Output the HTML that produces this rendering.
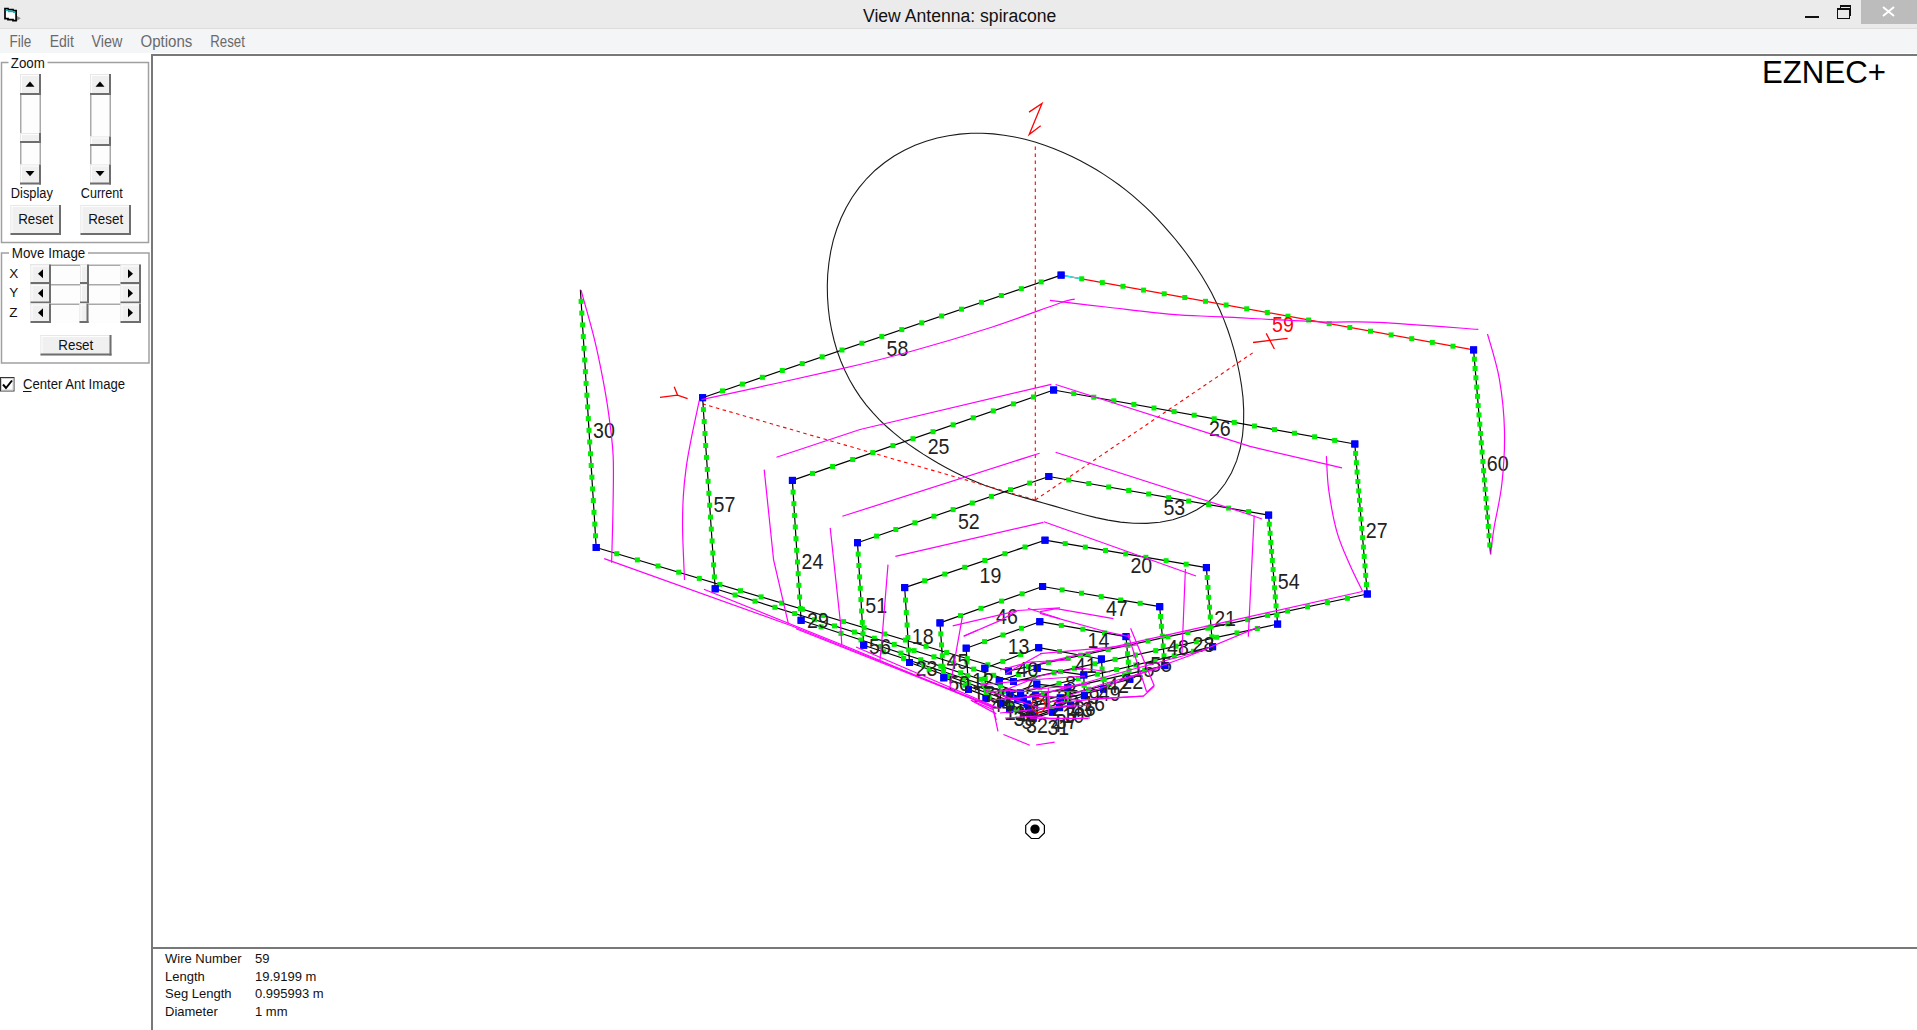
<!DOCTYPE html>
<html><head><meta charset="utf-8"><style>
html,body{margin:0;padding:0;}
body{width:1917px;height:1030px;position:relative;overflow:hidden;background:#fff;font-family:"Liberation Sans", sans-serif;}
.a{position:absolute;}
.t{position:absolute;white-space:nowrap;line-height:1;}
</style></head><body>
<div class="a" style="left:0;top:0;width:1917px;height:28px;background:#ebebeb;"></div>
<div class="a" style="left:0;top:28px;width:1917px;height:1px;background:#dcdcdc;"></div>
<div class="a" style="left:0;top:29px;width:1917px;height:24px;background:#f4f5f7;"></div>
<svg class="a" style="left:0;top:0" width="30" height="28"><path d="M17,16 L20.8,18.3 L17,20.8 Z" fill="#8a8a8a"/><path d="M5,8.6 H8 V9.6 H13 V10.6 H16.1 V20.6 H13 V19.6 H8 V18.6 H5 Z" fill="#fff" stroke="#000" stroke-width="1.7"/><rect x="5.8" y="9.4" width="2.4" height="1.6" fill="#15bcbc"/><rect x="8" y="10.4" width="5.2" height="1.8" fill="#12b0b0"/><rect x="13" y="11.4" width="2.3" height="1.6" fill="#15bcbc"/></svg>
<div class="t" style="left:863px;top:7.6px;font-size:17.6px;color:#111;">View Antenna: spiracone</div>
<div class="a" style="left:1805px;top:16px;width:14px;height:2px;background:#111;"></div>
<div class="a" style="left:1839.5px;top:4.5px;width:11px;height:11px;border:1px solid #111;border-top-width:2px;box-sizing:border-box;"></div>
<div class="a" style="left:1837px;top:7.5px;width:13px;height:11.5px;border:1px solid #111;border-top-width:2px;box-sizing:border-box;background:#ebebeb;"></div>
<div class="a" style="left:1861px;top:0;width:56px;height:24px;background:#bcbcbc;"></div>
<svg class="a" style="left:1861px;top:0" width="56" height="24"><path d="M22,7 L33,16 M33,7 L22,16" stroke="#fff" stroke-width="2"/></svg>
<svg class="a" style="left:0;top:28px" width="300" height="26" font-family='"Liberation Sans", sans-serif' font-size="16px" fill="#6a6a6a">
<text x="9.5" y="18.6" textLength="21.8" lengthAdjust="spacingAndGlyphs">File</text>
<text x="49.7" y="18.6" textLength="24.2" lengthAdjust="spacingAndGlyphs">Edit</text>
<text x="91.4" y="18.6" textLength="30.9" lengthAdjust="spacingAndGlyphs">View</text>
<text x="140.5" y="18.6" textLength="51.9" lengthAdjust="spacingAndGlyphs">Options</text>
<text x="210.3" y="18.6" textLength="34.6" lengthAdjust="spacingAndGlyphs">Reset</text>
</svg>
<!-- canvas borders -->
<div class="a" style="left:151px;top:54px;width:1766px;height:2px;background:#787878;"></div>
<div class="a" style="left:151px;top:54px;width:2px;height:976px;background:#787878;"></div>
<div class="a" style="left:152px;top:947px;width:1765px;height:2px;background:#787878;"></div>
<svg class="a" style="left:0;top:0" width="1917" height="1030">
<polygon points="831.6,330.0 829.6,319.2 828.3,308.3 827.5,297.1 827.3,285.8 827.7,274.5 828.9,263.0 830.7,251.6 833.3,240.2 836.8,229.0 841.1,218.0 846.2,207.4 852.2,197.2 859.1,187.6 866.8,178.5 875.2,170.2 884.4,162.7 894.1,156.0 904.4,150.2 915.0,145.3 926.0,141.2 937.2,138.0 948.5,135.7 959.8,134.1 971.1,133.3 982.3,133.3 993.3,133.9 1004.1,135.2 1014.7,137.0 1025.0,139.3 1035.0,142.0 1044.7,145.2 1054.1,148.7 1063.1,152.5 1071.9,156.5 1080.4,160.7 1088.6,165.2 1096.5,169.8 1104.2,174.6 1111.6,179.6 1118.9,184.7 1125.9,190.1 1132.7,195.6 1139.2,201.3 1145.6,207.2 1151.8,213.2 1157.8,219.4 1163.7,225.8 1169.4,232.3 1175.1,239.0 1180.6,245.9 1186.1,253.0 1191.4,260.4 1196.6,268.0 1201.7,275.8 1206.6,284.0 1211.4,292.5 1215.8,301.4 1220.1,310.5 1224.1,320.1 1227.8,330.0 1231.2,340.3 1234.3,350.9 1237.1,362.0 1239.5,373.5 1241.5,385.3 1243.0,397.6 1243.7,410.1 1243.6,422.9 1242.5,435.7 1240.2,448.5 1236.6,460.9 1231.5,472.8 1225.0,483.8 1217.0,493.8 1207.6,502.6 1196.9,509.8 1185.3,515.6 1172.8,519.7 1159.9,522.3 1146.7,523.4 1133.5,523.3 1120.5,522.1 1108.0,520.1 1096.0,517.6 1084.5,514.7 1073.6,511.7 1063.3,508.8 1053.5,505.9 1044.1,503.2 1035.0,500.6 1026.2,498.1 1017.6,495.7 1009.1,493.3 1000.8,490.7 992.7,488.1 984.6,485.2 976.6,482.1 968.8,478.7 961.0,475.2 953.4,471.4 945.8,467.4 938.2,463.2 930.7,458.8 923.2,454.1 915.8,449.2 908.3,444.1 900.9,438.6 893.6,432.7 886.5,426.5 879.5,419.8 872.8,412.7 866.3,405.1 860.3,397.1 854.7,388.6 849.5,379.7 844.9,370.4 840.7,360.8 837.1,350.8 834.1,340.5 831.6,330.0" fill="none" stroke="#1a1a1a" stroke-width="1.1"/>
<g stroke="#f00" stroke-width="1.1" fill="none" stroke-dasharray="3.5,3.5"><line x1="1035.3" y1="500.0" x2="1035.3" y2="145"/><line x1="1035.3" y1="500.0" x2="703" y2="404"/><line x1="1035.3" y1="500.0" x2="1254" y2="352"/></g>
<g stroke="#f00" stroke-width="1.3" fill="none"><polyline points="1029,112.1 1042,103.5 1029.2,134.5 1040.7,125.7"/><polyline points="660,397.3 677.5,395.1 687.6,398.6"/><line x1="677.5" y1="395.1" x2="674.2" y2="386.8"/><line x1="1253" y1="342.5" x2="1287.6" y2="338.3"/><line x1="1266.2" y1="333.4" x2="1274.4" y2="349"/></g>
<g stroke-width="1.2"><line x1="1017.6" y1="699.2" x2="1035.6" y2="695.7" stroke="#000"/><line x1="1035.6" y1="695.7" x2="1060.3" y2="697.9" stroke="#000"/><line x1="1060.3" y1="697.9" x2="1059.6" y2="707.6" stroke="#000"/><line x1="1059.6" y1="707.6" x2="1032.7" y2="717.4" stroke="#000"/><line x1="1032.7" y1="717.4" x2="1000.9" y2="703.3" stroke="#000"/><line x1="1000.9" y1="703.3" x2="999.3" y2="680.7" stroke="#000"/><line x1="999.3" y1="680.7" x2="1037.2" y2="668.3" stroke="#000"/><line x1="1037.2" y1="668.3" x2="1083.8" y2="674.9" stroke="#000"/><line x1="1083.8" y1="674.9" x2="1084.4" y2="695.7" stroke="#000"/><line x1="1084.4" y1="695.7" x2="1030.7" y2="712.5" stroke="#000"/><line x1="1030.7" y1="712.5" x2="968.5" y2="689.4" stroke="#000"/><line x1="968.5" y1="689.4" x2="966.2" y2="648.2" stroke="#000"/><line x1="966.2" y1="648.2" x2="1039.8" y2="621.7" stroke="#000"/><line x1="1039.8" y1="621.7" x2="1126.0" y2="636.6" stroke="#000"/><line x1="1126.0" y1="636.6" x2="1129.8" y2="679.3" stroke="#000"/><line x1="1129.8" y1="679.3" x2="1027.2" y2="704.1" stroke="#000"/><line x1="1027.2" y1="704.1" x2="909.5" y2="662.5" stroke="#000"/><line x1="909.5" y1="662.5" x2="904.7" y2="587.6" stroke="#000"/><line x1="904.7" y1="587.6" x2="1045.0" y2="540.2" stroke="#000"/><line x1="1045.0" y1="540.2" x2="1206.4" y2="567.6" stroke="#000"/><line x1="1206.4" y1="567.6" x2="1212.6" y2="646.7" stroke="#000"/><line x1="1212.6" y1="646.7" x2="1020.6" y2="692.5" stroke="#000"/><line x1="1020.6" y1="692.5" x2="801.1" y2="620.3" stroke="#000"/><line x1="801.1" y1="620.3" x2="792.4" y2="480.4" stroke="#000"/><line x1="792.4" y1="480.4" x2="1053.6" y2="390.0" stroke="#000"/><line x1="1053.6" y1="390.0" x2="1354.8" y2="444.0" stroke="#000"/><line x1="1354.8" y1="444.0" x2="1367.3" y2="594.0" stroke="#000"/><line x1="1367.3" y1="594.0" x2="1008.5" y2="671.0" stroke="#000"/><line x1="1008.5" y1="671.0" x2="596.2" y2="547.5" stroke="#000"/><line x1="596.2" y1="547.5" x2="580.4" y2="289.7" stroke="#000"/><line x1="1052.4" y1="712.4" x2="1033.1" y2="718.3" stroke="#000"/><line x1="1033.1" y1="718.3" x2="1009.6" y2="709.6" stroke="#000"/><line x1="1009.6" y1="709.6" x2="1009.9" y2="694.1" stroke="#000"/><line x1="1009.9" y1="694.1" x2="1036.8" y2="684.1" stroke="#000"/><line x1="1036.8" y1="684.1" x2="1067.8" y2="687.7" stroke="#000"/><line x1="1067.8" y1="687.7" x2="1070.6" y2="705.4" stroke="#000"/><line x1="1070.6" y1="705.4" x2="1031.5" y2="714.1" stroke="#000"/><line x1="1031.5" y1="714.1" x2="986.0" y2="698.6" stroke="#000"/><line x1="986.0" y1="698.6" x2="984.8" y2="668.3" stroke="#000"/><line x1="984.8" y1="668.3" x2="1038.7" y2="647.7" stroke="#000"/><line x1="1038.7" y1="647.7" x2="1101.4" y2="659.0" stroke="#000"/><line x1="1101.4" y1="659.0" x2="1103.6" y2="689.1" stroke="#000"/><line x1="1103.6" y1="689.1" x2="1028.6" y2="707.2" stroke="#000"/><line x1="1028.6" y1="707.2" x2="943.8" y2="677.8" stroke="#000"/><line x1="943.8" y1="677.8" x2="940.0" y2="622.9" stroke="#000"/><line x1="940.0" y1="622.9" x2="1042.6" y2="586.5" stroke="#000"/><line x1="1042.6" y1="586.5" x2="1159.7" y2="606.7" stroke="#000"/><line x1="1159.7" y1="606.7" x2="1164.9" y2="665.6" stroke="#000"/><line x1="1164.9" y1="665.6" x2="1023.3" y2="698.2" stroke="#000"/><line x1="1023.3" y1="698.2" x2="863.7" y2="645.2" stroke="#000"/><line x1="863.7" y1="645.2" x2="857.5" y2="542.7" stroke="#000"/><line x1="857.5" y1="542.7" x2="1048.8" y2="476.5" stroke="#000"/><line x1="1048.8" y1="476.5" x2="1268.6" y2="515.1" stroke="#000"/><line x1="1268.6" y1="515.1" x2="1277.6" y2="624.1" stroke="#000"/><line x1="1277.6" y1="624.1" x2="1013.5" y2="681.5" stroke="#000"/><line x1="1013.5" y1="681.5" x2="715.2" y2="588.8" stroke="#000"/><line x1="715.2" y1="588.8" x2="702.6" y2="397.7" stroke="#000"/><line x1="702.6" y1="397.7" x2="1061.1" y2="275.1" stroke="#000"/><line x1="1061.1" y1="275.1" x2="1473.6" y2="349.9" stroke="#f00"/><line x1="1473.6" y1="349.9" x2="1490.6" y2="554.3" stroke="#000"/></g>
<line x1="1061.1" y1="275.1" x2="1081.7" y2="278.8" stroke="#0ff" stroke-width="1.3"/>
<g fill="#00ee00"><rect x="1014.3" y="707.8" width="5" height="5"/><rect x="997.6" y="689.5" width="5" height="5"/><rect x="1015.8" y="672.0" width="5" height="5"/><rect x="1058.0" y="669.1" width="5" height="5"/><rect x="1081.6" y="682.8" width="5" height="5"/><rect x="1064.0" y="698.8" width="5" height="5"/><rect x="1046.1" y="704.4" width="5" height="5"/><rect x="1007.5" y="702.3" width="5" height="5"/><rect x="986.7" y="694.6" width="5" height="5"/><rect x="965.2" y="673.2" width="5" height="5"/><rect x="964.5" y="659.4" width="5" height="5"/><rect x="982.1" y="639.1" width="5" height="5"/><rect x="1000.5" y="632.5" width="5" height="5"/><rect x="1018.9" y="625.8" width="5" height="5"/><rect x="1058.8" y="622.9" width="5" height="5"/><rect x="1080.4" y="626.7" width="5" height="5"/><rect x="1102.0" y="630.4" width="5" height="5"/><rect x="1124.3" y="642.6" width="5" height="5"/><rect x="1125.0" y="651.2" width="5" height="5"/><rect x="1125.8" y="659.7" width="5" height="5"/><rect x="1126.5" y="668.3" width="5" height="5"/><rect x="1106.8" y="681.8" width="5" height="5"/><rect x="1086.2" y="686.7" width="5" height="5"/><rect x="1065.7" y="691.7" width="5" height="5"/><rect x="1045.2" y="696.7" width="5" height="5"/><rect x="1005.1" y="694.7" width="5" height="5"/><rect x="985.4" y="687.7" width="5" height="5"/><rect x="965.8" y="680.8" width="5" height="5"/><rect x="946.2" y="673.9" width="5" height="5"/><rect x="926.6" y="666.9" width="5" height="5"/><rect x="906.2" y="647.5" width="5" height="5"/><rect x="905.4" y="635.0" width="5" height="5"/><rect x="904.6" y="622.5" width="5" height="5"/><rect x="903.8" y="610.1" width="5" height="5"/><rect x="903.0" y="597.6" width="5" height="5"/><rect x="922.2" y="578.3" width="5" height="5"/><rect x="942.3" y="571.6" width="5" height="5"/><rect x="962.3" y="564.8" width="5" height="5"/><rect x="982.4" y="558.0" width="5" height="5"/><rect x="1002.4" y="551.2" width="5" height="5"/><rect x="1022.5" y="544.5" width="5" height="5"/><rect x="1062.7" y="541.1" width="5" height="5"/><rect x="1082.8" y="544.6" width="5" height="5"/><rect x="1103.0" y="548.0" width="5" height="5"/><rect x="1123.2" y="551.4" width="5" height="5"/><rect x="1143.4" y="554.8" width="5" height="5"/><rect x="1163.6" y="558.2" width="5" height="5"/><rect x="1183.7" y="561.7" width="5" height="5"/><rect x="1204.7" y="575.0" width="5" height="5"/><rect x="1205.5" y="584.9" width="5" height="5"/><rect x="1206.2" y="594.8" width="5" height="5"/><rect x="1207.0" y="604.7" width="5" height="5"/><rect x="1207.8" y="614.5" width="5" height="5"/><rect x="1208.5" y="624.4" width="5" height="5"/><rect x="1209.3" y="634.3" width="5" height="5"/><rect x="1190.9" y="648.8" width="5" height="5"/><rect x="1171.7" y="653.4" width="5" height="5"/><rect x="1152.5" y="657.9" width="5" height="5"/><rect x="1133.3" y="662.5" width="5" height="5"/><rect x="1114.1" y="667.1" width="5" height="5"/><rect x="1094.9" y="671.7" width="5" height="5"/><rect x="1075.7" y="676.2" width="5" height="5"/><rect x="1056.5" y="680.8" width="5" height="5"/><rect x="1037.3" y="685.4" width="5" height="5"/><rect x="998.1" y="683.4" width="5" height="5"/><rect x="978.2" y="676.8" width="5" height="5"/><rect x="958.2" y="670.3" width="5" height="5"/><rect x="938.3" y="663.7" width="5" height="5"/><rect x="918.3" y="657.2" width="5" height="5"/><rect x="898.4" y="650.6" width="5" height="5"/><rect x="878.4" y="644.0" width="5" height="5"/><rect x="858.5" y="637.5" width="5" height="5"/><rect x="838.5" y="630.9" width="5" height="5"/><rect x="818.6" y="624.4" width="5" height="5"/><rect x="797.9" y="606.1" width="5" height="5"/><rect x="797.1" y="594.5" width="5" height="5"/><rect x="796.4" y="582.8" width="5" height="5"/><rect x="795.7" y="571.2" width="5" height="5"/><rect x="795.0" y="559.5" width="5" height="5"/><rect x="794.2" y="547.8" width="5" height="5"/><rect x="793.5" y="536.2" width="5" height="5"/><rect x="792.8" y="524.5" width="5" height="5"/><rect x="792.1" y="512.9" width="5" height="5"/><rect x="791.4" y="501.2" width="5" height="5"/><rect x="790.6" y="489.6" width="5" height="5"/><rect x="810.0" y="470.9" width="5" height="5"/><rect x="830.1" y="464.0" width="5" height="5"/><rect x="850.2" y="457.0" width="5" height="5"/><rect x="870.3" y="450.1" width="5" height="5"/><rect x="890.4" y="443.1" width="5" height="5"/><rect x="910.5" y="436.2" width="5" height="5"/><rect x="930.5" y="429.2" width="5" height="5"/><rect x="950.6" y="422.3" width="5" height="5"/><rect x="970.7" y="415.3" width="5" height="5"/><rect x="990.8" y="408.4" width="5" height="5"/><rect x="1010.9" y="401.4" width="5" height="5"/><rect x="1031.0" y="394.5" width="5" height="5"/><rect x="1071.2" y="391.1" width="5" height="5"/><rect x="1091.3" y="394.7" width="5" height="5"/><rect x="1111.3" y="398.3" width="5" height="5"/><rect x="1131.4" y="401.9" width="5" height="5"/><rect x="1151.5" y="405.5" width="5" height="5"/><rect x="1171.6" y="409.1" width="5" height="5"/><rect x="1191.7" y="412.7" width="5" height="5"/><rect x="1211.7" y="416.3" width="5" height="5"/><rect x="1231.8" y="419.9" width="5" height="5"/><rect x="1251.9" y="423.5" width="5" height="5"/><rect x="1272.0" y="427.1" width="5" height="5"/><rect x="1292.1" y="430.7" width="5" height="5"/><rect x="1312.1" y="434.3" width="5" height="5"/><rect x="1332.2" y="437.9" width="5" height="5"/><rect x="1353.1" y="450.9" width="5" height="5"/><rect x="1353.9" y="460.2" width="5" height="5"/><rect x="1354.6" y="469.6" width="5" height="5"/><rect x="1355.4" y="479.0" width="5" height="5"/><rect x="1356.2" y="488.4" width="5" height="5"/><rect x="1357.0" y="497.8" width="5" height="5"/><rect x="1357.8" y="507.1" width="5" height="5"/><rect x="1358.5" y="516.5" width="5" height="5"/><rect x="1359.3" y="525.9" width="5" height="5"/><rect x="1360.1" y="535.2" width="5" height="5"/><rect x="1360.9" y="544.6" width="5" height="5"/><rect x="1361.7" y="554.0" width="5" height="5"/><rect x="1362.5" y="563.4" width="5" height="5"/><rect x="1363.2" y="572.8" width="5" height="5"/><rect x="1364.0" y="582.1" width="5" height="5"/><rect x="1344.9" y="595.8" width="5" height="5"/><rect x="1324.9" y="600.1" width="5" height="5"/><rect x="1305.0" y="604.3" width="5" height="5"/><rect x="1285.1" y="608.6" width="5" height="5"/><rect x="1265.1" y="612.9" width="5" height="5"/><rect x="1245.2" y="617.2" width="5" height="5"/><rect x="1225.3" y="621.4" width="5" height="5"/><rect x="1205.3" y="625.7" width="5" height="5"/><rect x="1185.4" y="630.0" width="5" height="5"/><rect x="1165.5" y="634.3" width="5" height="5"/><rect x="1145.5" y="638.6" width="5" height="5"/><rect x="1125.6" y="642.8" width="5" height="5"/><rect x="1105.7" y="647.1" width="5" height="5"/><rect x="1085.7" y="651.4" width="5" height="5"/><rect x="1065.8" y="655.7" width="5" height="5"/><rect x="1045.9" y="659.9" width="5" height="5"/><rect x="1025.9" y="664.2" width="5" height="5"/><rect x="985.4" y="662.3" width="5" height="5"/><rect x="964.8" y="656.1" width="5" height="5"/><rect x="944.2" y="650.0" width="5" height="5"/><rect x="923.5" y="643.8" width="5" height="5"/><rect x="902.9" y="637.6" width="5" height="5"/><rect x="882.3" y="631.5" width="5" height="5"/><rect x="861.7" y="625.3" width="5" height="5"/><rect x="841.1" y="619.1" width="5" height="5"/><rect x="820.5" y="612.9" width="5" height="5"/><rect x="799.9" y="606.8" width="5" height="5"/><rect x="779.2" y="600.6" width="5" height="5"/><rect x="758.6" y="594.4" width="5" height="5"/><rect x="738.0" y="588.2" width="5" height="5"/><rect x="717.4" y="582.0" width="5" height="5"/><rect x="696.8" y="575.9" width="5" height="5"/><rect x="676.2" y="569.7" width="5" height="5"/><rect x="655.5" y="563.5" width="5" height="5"/><rect x="634.9" y="557.4" width="5" height="5"/><rect x="614.3" y="551.2" width="5" height="5"/><rect x="593.0" y="533.3" width="5" height="5"/><rect x="592.3" y="521.6" width="5" height="5"/><rect x="591.5" y="509.8" width="5" height="5"/><rect x="590.8" y="498.1" width="5" height="5"/><rect x="590.1" y="486.4" width="5" height="5"/><rect x="589.4" y="474.7" width="5" height="5"/><rect x="588.7" y="463.0" width="5" height="5"/><rect x="588.0" y="451.3" width="5" height="5"/><rect x="587.2" y="439.5" width="5" height="5"/><rect x="586.5" y="427.8" width="5" height="5"/><rect x="585.8" y="416.1" width="5" height="5"/><rect x="585.1" y="404.4" width="5" height="5"/><rect x="584.4" y="392.7" width="5" height="5"/><rect x="583.6" y="380.9" width="5" height="5"/><rect x="582.9" y="369.2" width="5" height="5"/><rect x="582.2" y="357.5" width="5" height="5"/><rect x="581.5" y="345.8" width="5" height="5"/><rect x="580.8" y="334.1" width="5" height="5"/><rect x="580.1" y="322.4" width="5" height="5"/><rect x="579.3" y="310.6" width="5" height="5"/><rect x="578.6" y="298.9" width="5" height="5"/><rect x="1066.7" y="694.0" width="5" height="5"/><rect x="1048.6" y="707.3" width="5" height="5"/><rect x="1006.3" y="703.9" width="5" height="5"/><rect x="983.1" y="686.0" width="5" height="5"/><rect x="982.7" y="675.9" width="5" height="5"/><rect x="1000.3" y="658.9" width="5" height="5"/><rect x="1018.2" y="652.1" width="5" height="5"/><rect x="1057.1" y="649.0" width="5" height="5"/><rect x="1078.0" y="652.7" width="5" height="5"/><rect x="1099.6" y="666.5" width="5" height="5"/><rect x="1100.4" y="676.6" width="5" height="5"/><rect x="1082.4" y="691.1" width="5" height="5"/><rect x="1063.6" y="695.7" width="5" height="5"/><rect x="1044.9" y="700.2" width="5" height="5"/><rect x="1004.9" y="697.4" width="5" height="5"/><rect x="983.7" y="690.0" width="5" height="5"/><rect x="962.5" y="682.7" width="5" height="5"/><rect x="940.5" y="664.3" width="5" height="5"/><rect x="939.8" y="653.3" width="5" height="5"/><rect x="939.0" y="642.4" width="5" height="5"/><rect x="938.3" y="631.4" width="5" height="5"/><rect x="958.0" y="613.1" width="5" height="5"/><rect x="978.5" y="605.8" width="5" height="5"/><rect x="999.1" y="598.6" width="5" height="5"/><rect x="1019.6" y="591.3" width="5" height="5"/><rect x="1059.6" y="587.4" width="5" height="5"/><rect x="1079.1" y="590.7" width="5" height="5"/><rect x="1098.7" y="594.1" width="5" height="5"/><rect x="1118.2" y="597.5" width="5" height="5"/><rect x="1137.7" y="600.8" width="5" height="5"/><rect x="1158.1" y="614.0" width="5" height="5"/><rect x="1158.9" y="623.8" width="5" height="5"/><rect x="1159.8" y="633.7" width="5" height="5"/><rect x="1160.7" y="643.5" width="5" height="5"/><rect x="1161.5" y="653.3" width="5" height="5"/><rect x="1142.2" y="667.8" width="5" height="5"/><rect x="1121.9" y="672.4" width="5" height="5"/><rect x="1101.7" y="677.1" width="5" height="5"/><rect x="1081.5" y="681.7" width="5" height="5"/><rect x="1061.3" y="686.4" width="5" height="5"/><rect x="1041.0" y="691.0" width="5" height="5"/><rect x="1000.9" y="689.0" width="5" height="5"/><rect x="980.9" y="682.4" width="5" height="5"/><rect x="961.0" y="675.8" width="5" height="5"/><rect x="941.0" y="669.2" width="5" height="5"/><rect x="921.1" y="662.6" width="5" height="5"/><rect x="901.1" y="655.9" width="5" height="5"/><rect x="881.2" y="649.3" width="5" height="5"/><rect x="860.5" y="631.3" width="5" height="5"/><rect x="859.8" y="619.9" width="5" height="5"/><rect x="859.1" y="608.5" width="5" height="5"/><rect x="858.4" y="597.1" width="5" height="5"/><rect x="857.8" y="585.8" width="5" height="5"/><rect x="857.1" y="574.4" width="5" height="5"/><rect x="856.4" y="563.0" width="5" height="5"/><rect x="855.7" y="551.6" width="5" height="5"/><rect x="874.1" y="533.6" width="5" height="5"/><rect x="893.3" y="527.0" width="5" height="5"/><rect x="912.4" y="520.3" width="5" height="5"/><rect x="931.5" y="513.7" width="5" height="5"/><rect x="950.6" y="507.1" width="5" height="5"/><rect x="969.8" y="500.5" width="5" height="5"/><rect x="988.9" y="493.9" width="5" height="5"/><rect x="1008.0" y="487.2" width="5" height="5"/><rect x="1027.2" y="480.6" width="5" height="5"/><rect x="1066.3" y="477.5" width="5" height="5"/><rect x="1086.3" y="481.0" width="5" height="5"/><rect x="1106.2" y="484.5" width="5" height="5"/><rect x="1126.2" y="488.0" width="5" height="5"/><rect x="1146.2" y="491.5" width="5" height="5"/><rect x="1166.2" y="495.1" width="5" height="5"/><rect x="1186.2" y="498.6" width="5" height="5"/><rect x="1206.2" y="502.1" width="5" height="5"/><rect x="1226.1" y="505.6" width="5" height="5"/><rect x="1246.1" y="509.1" width="5" height="5"/><rect x="1266.8" y="521.7" width="5" height="5"/><rect x="1267.6" y="530.8" width="5" height="5"/><rect x="1268.3" y="539.9" width="5" height="5"/><rect x="1269.1" y="548.9" width="5" height="5"/><rect x="1269.8" y="558.0" width="5" height="5"/><rect x="1270.6" y="567.1" width="5" height="5"/><rect x="1271.3" y="576.2" width="5" height="5"/><rect x="1272.1" y="585.3" width="5" height="5"/><rect x="1272.8" y="594.4" width="5" height="5"/><rect x="1273.6" y="603.4" width="5" height="5"/><rect x="1274.3" y="612.5" width="5" height="5"/><rect x="1254.8" y="626.0" width="5" height="5"/><rect x="1234.5" y="630.4" width="5" height="5"/><rect x="1214.2" y="634.8" width="5" height="5"/><rect x="1193.8" y="639.3" width="5" height="5"/><rect x="1173.5" y="643.7" width="5" height="5"/><rect x="1153.2" y="648.1" width="5" height="5"/><rect x="1132.9" y="652.5" width="5" height="5"/><rect x="1112.6" y="656.9" width="5" height="5"/><rect x="1092.3" y="661.3" width="5" height="5"/><rect x="1071.9" y="665.8" width="5" height="5"/><rect x="1051.6" y="670.2" width="5" height="5"/><rect x="1031.3" y="674.6" width="5" height="5"/><rect x="991.1" y="672.8" width="5" height="5"/><rect x="971.2" y="666.6" width="5" height="5"/><rect x="951.3" y="660.5" width="5" height="5"/><rect x="931.5" y="654.3" width="5" height="5"/><rect x="911.6" y="648.1" width="5" height="5"/><rect x="891.7" y="641.9" width="5" height="5"/><rect x="871.8" y="635.7" width="5" height="5"/><rect x="851.9" y="629.6" width="5" height="5"/><rect x="832.0" y="623.4" width="5" height="5"/><rect x="812.1" y="617.2" width="5" height="5"/><rect x="792.2" y="611.0" width="5" height="5"/><rect x="772.4" y="604.8" width="5" height="5"/><rect x="752.5" y="598.7" width="5" height="5"/><rect x="732.6" y="592.5" width="5" height="5"/><rect x="711.9" y="574.4" width="5" height="5"/><rect x="711.1" y="562.4" width="5" height="5"/><rect x="710.3" y="550.5" width="5" height="5"/><rect x="709.6" y="538.5" width="5" height="5"/><rect x="708.8" y="526.6" width="5" height="5"/><rect x="708.0" y="514.6" width="5" height="5"/><rect x="707.2" y="502.7" width="5" height="5"/><rect x="706.4" y="490.8" width="5" height="5"/><rect x="705.6" y="478.8" width="5" height="5"/><rect x="704.8" y="466.9" width="5" height="5"/><rect x="704.0" y="454.9" width="5" height="5"/><rect x="703.2" y="443.0" width="5" height="5"/><rect x="702.5" y="431.0" width="5" height="5"/><rect x="701.7" y="419.1" width="5" height="5"/><rect x="700.9" y="407.1" width="5" height="5"/><rect x="720.0" y="388.4" width="5" height="5"/><rect x="739.9" y="381.6" width="5" height="5"/><rect x="759.9" y="374.8" width="5" height="5"/><rect x="779.8" y="368.0" width="5" height="5"/><rect x="799.7" y="361.1" width="5" height="5"/><rect x="819.6" y="354.3" width="5" height="5"/><rect x="839.5" y="347.5" width="5" height="5"/><rect x="859.4" y="340.7" width="5" height="5"/><rect x="879.3" y="333.9" width="5" height="5"/><rect x="899.3" y="327.1" width="5" height="5"/><rect x="919.2" y="320.3" width="5" height="5"/><rect x="939.1" y="313.5" width="5" height="5"/><rect x="959.0" y="306.7" width="5" height="5"/><rect x="978.9" y="299.8" width="5" height="5"/><rect x="998.8" y="293.0" width="5" height="5"/><rect x="1018.8" y="286.2" width="5" height="5"/><rect x="1038.7" y="279.4" width="5" height="5"/><rect x="1079.2" y="276.3" width="5" height="5"/><rect x="1099.8" y="280.1" width="5" height="5"/><rect x="1120.5" y="283.8" width="5" height="5"/><rect x="1141.1" y="287.6" width="5" height="5"/><rect x="1161.7" y="291.3" width="5" height="5"/><rect x="1182.3" y="295.0" width="5" height="5"/><rect x="1203.0" y="298.8" width="5" height="5"/><rect x="1223.6" y="302.5" width="5" height="5"/><rect x="1244.2" y="306.3" width="5" height="5"/><rect x="1264.8" y="310.0" width="5" height="5"/><rect x="1285.5" y="313.7" width="5" height="5"/><rect x="1306.1" y="317.5" width="5" height="5"/><rect x="1326.7" y="321.2" width="5" height="5"/><rect x="1347.3" y="325.0" width="5" height="5"/><rect x="1368.0" y="328.7" width="5" height="5"/><rect x="1388.6" y="332.4" width="5" height="5"/><rect x="1409.2" y="336.2" width="5" height="5"/><rect x="1429.8" y="339.9" width="5" height="5"/><rect x="1450.5" y="343.7" width="5" height="5"/><rect x="1471.9" y="356.7" width="5" height="5"/><rect x="1472.6" y="366.0" width="5" height="5"/><rect x="1473.4" y="375.3" width="5" height="5"/><rect x="1474.2" y="384.6" width="5" height="5"/><rect x="1475.0" y="393.9" width="5" height="5"/><rect x="1475.7" y="403.1" width="5" height="5"/><rect x="1476.5" y="412.4" width="5" height="5"/><rect x="1477.3" y="421.7" width="5" height="5"/><rect x="1478.1" y="431.0" width="5" height="5"/><rect x="1478.8" y="440.3" width="5" height="5"/><rect x="1479.6" y="449.6" width="5" height="5"/><rect x="1480.4" y="458.9" width="5" height="5"/><rect x="1481.1" y="468.2" width="5" height="5"/><rect x="1481.9" y="477.5" width="5" height="5"/><rect x="1482.7" y="486.8" width="5" height="5"/><rect x="1483.5" y="496.1" width="5" height="5"/><rect x="1484.2" y="505.3" width="5" height="5"/><rect x="1485.0" y="514.6" width="5" height="5"/><rect x="1485.8" y="523.9" width="5" height="5"/><rect x="1486.6" y="533.2" width="5" height="5"/><rect x="1487.3" y="542.5" width="5" height="5"/></g>
<g fill="#0000ff"><rect x="1014.1" y="695.7" width="7" height="7"/><rect x="1032.1" y="692.2" width="7" height="7"/><rect x="1032.1" y="692.2" width="7" height="7"/><rect x="1056.8" y="694.4" width="7" height="7"/><rect x="1056.8" y="694.4" width="7" height="7"/><rect x="1056.1" y="704.1" width="7" height="7"/><rect x="1056.1" y="704.1" width="7" height="7"/><rect x="1029.2" y="713.9" width="7" height="7"/><rect x="1029.2" y="713.9" width="7" height="7"/><rect x="997.4" y="699.8" width="7" height="7"/><rect x="997.4" y="699.8" width="7" height="7"/><rect x="995.8" y="677.2" width="7" height="7"/><rect x="995.8" y="677.2" width="7" height="7"/><rect x="1033.7" y="664.8" width="7" height="7"/><rect x="1033.7" y="664.8" width="7" height="7"/><rect x="1080.3" y="671.4" width="7" height="7"/><rect x="1080.3" y="671.4" width="7" height="7"/><rect x="1080.9" y="692.2" width="7" height="7"/><rect x="1080.9" y="692.2" width="7" height="7"/><rect x="1027.2" y="709.0" width="7" height="7"/><rect x="1027.2" y="709.0" width="7" height="7"/><rect x="965.0" y="685.9" width="7" height="7"/><rect x="965.0" y="685.9" width="7" height="7"/><rect x="962.7" y="644.7" width="7" height="7"/><rect x="962.7" y="644.7" width="7" height="7"/><rect x="1036.3" y="618.2" width="7" height="7"/><rect x="1036.3" y="618.2" width="7" height="7"/><rect x="1122.5" y="633.1" width="7" height="7"/><rect x="1122.5" y="633.1" width="7" height="7"/><rect x="1126.3" y="675.8" width="7" height="7"/><rect x="1126.3" y="675.8" width="7" height="7"/><rect x="1023.7" y="700.6" width="7" height="7"/><rect x="1023.7" y="700.6" width="7" height="7"/><rect x="906.0" y="659.0" width="7" height="7"/><rect x="906.0" y="659.0" width="7" height="7"/><rect x="901.2" y="584.1" width="7" height="7"/><rect x="901.2" y="584.1" width="7" height="7"/><rect x="1041.5" y="536.7" width="7" height="7"/><rect x="1041.5" y="536.7" width="7" height="7"/><rect x="1202.9" y="564.1" width="7" height="7"/><rect x="1202.9" y="564.1" width="7" height="7"/><rect x="1209.1" y="643.2" width="7" height="7"/><rect x="1209.1" y="643.2" width="7" height="7"/><rect x="1017.1" y="689.0" width="7" height="7"/><rect x="1017.1" y="689.0" width="7" height="7"/><rect x="797.6" y="616.8" width="7" height="7"/><rect x="797.6" y="616.8" width="7" height="7"/><rect x="788.9" y="476.9" width="7" height="7"/><rect x="788.9" y="476.9" width="7" height="7"/><rect x="1050.1" y="386.5" width="7" height="7"/><rect x="1050.1" y="386.5" width="7" height="7"/><rect x="1351.3" y="440.5" width="7" height="7"/><rect x="1351.3" y="440.5" width="7" height="7"/><rect x="1363.8" y="590.5" width="7" height="7"/><rect x="1363.8" y="590.5" width="7" height="7"/><rect x="1005.0" y="667.5" width="7" height="7"/><rect x="1005.0" y="667.5" width="7" height="7"/><rect x="592.7" y="544.0" width="7" height="7"/><rect x="592.7" y="544.0" width="7" height="7"/><rect x="1048.9" y="708.9" width="7" height="7"/><rect x="1029.6" y="714.8" width="7" height="7"/><rect x="1029.6" y="714.8" width="7" height="7"/><rect x="1006.1" y="706.1" width="7" height="7"/><rect x="1006.1" y="706.1" width="7" height="7"/><rect x="1006.4" y="690.6" width="7" height="7"/><rect x="1006.4" y="690.6" width="7" height="7"/><rect x="1033.3" y="680.6" width="7" height="7"/><rect x="1033.3" y="680.6" width="7" height="7"/><rect x="1064.3" y="684.2" width="7" height="7"/><rect x="1064.3" y="684.2" width="7" height="7"/><rect x="1067.1" y="701.9" width="7" height="7"/><rect x="1067.1" y="701.9" width="7" height="7"/><rect x="1028.0" y="710.6" width="7" height="7"/><rect x="1028.0" y="710.6" width="7" height="7"/><rect x="982.5" y="695.1" width="7" height="7"/><rect x="982.5" y="695.1" width="7" height="7"/><rect x="981.3" y="664.8" width="7" height="7"/><rect x="981.3" y="664.8" width="7" height="7"/><rect x="1035.2" y="644.2" width="7" height="7"/><rect x="1035.2" y="644.2" width="7" height="7"/><rect x="1097.9" y="655.5" width="7" height="7"/><rect x="1097.9" y="655.5" width="7" height="7"/><rect x="1100.1" y="685.6" width="7" height="7"/><rect x="1100.1" y="685.6" width="7" height="7"/><rect x="1025.1" y="703.7" width="7" height="7"/><rect x="1025.1" y="703.7" width="7" height="7"/><rect x="940.3" y="674.3" width="7" height="7"/><rect x="940.3" y="674.3" width="7" height="7"/><rect x="936.5" y="619.4" width="7" height="7"/><rect x="936.5" y="619.4" width="7" height="7"/><rect x="1039.1" y="583.0" width="7" height="7"/><rect x="1039.1" y="583.0" width="7" height="7"/><rect x="1156.2" y="603.2" width="7" height="7"/><rect x="1156.2" y="603.2" width="7" height="7"/><rect x="1161.4" y="662.1" width="7" height="7"/><rect x="1161.4" y="662.1" width="7" height="7"/><rect x="1019.8" y="694.7" width="7" height="7"/><rect x="1019.8" y="694.7" width="7" height="7"/><rect x="860.2" y="641.7" width="7" height="7"/><rect x="860.2" y="641.7" width="7" height="7"/><rect x="854.0" y="539.2" width="7" height="7"/><rect x="854.0" y="539.2" width="7" height="7"/><rect x="1045.3" y="473.0" width="7" height="7"/><rect x="1045.3" y="473.0" width="7" height="7"/><rect x="1265.1" y="511.6" width="7" height="7"/><rect x="1265.1" y="511.6" width="7" height="7"/><rect x="1274.1" y="620.6" width="7" height="7"/><rect x="1274.1" y="620.6" width="7" height="7"/><rect x="1010.0" y="678.0" width="7" height="7"/><rect x="1010.0" y="678.0" width="7" height="7"/><rect x="711.7" y="585.3" width="7" height="7"/><rect x="711.7" y="585.3" width="7" height="7"/><rect x="699.1" y="394.2" width="7" height="7"/><rect x="699.1" y="394.2" width="7" height="7"/><rect x="1057.6" y="271.6" width="7" height="7"/><rect x="1057.6" y="271.6" width="7" height="7"/><rect x="1470.1" y="346.4" width="7" height="7"/><rect x="1470.1" y="346.4" width="7" height="7"/></g>
<g font-family='"Liberation Sans", sans-serif' font-size="22px"><text x="1031.3" y="716.6" fill="#222" textLength="10.9" lengthAdjust="spacingAndGlyphs">1</text><text x="1052.6" y="715.9" fill="#222" textLength="10.9" lengthAdjust="spacingAndGlyphs">2</text><text x="1064.6" y="721.8" fill="#222" textLength="10.9" lengthAdjust="spacingAndGlyphs">3</text><text x="1050.8" y="731.6" fill="#222" textLength="10.9" lengthAdjust="spacingAndGlyphs">4</text><text x="1021.5" y="729.4" fill="#222" textLength="10.9" lengthAdjust="spacingAndGlyphs">5</text><text x="1004.8" y="711.1" fill="#222" textLength="10.9" lengthAdjust="spacingAndGlyphs">6</text><text x="1023.0" y="693.6" fill="#222" textLength="10.9" lengthAdjust="spacingAndGlyphs">7</text><text x="1065.2" y="690.7" fill="#222" textLength="10.9" lengthAdjust="spacingAndGlyphs">8</text><text x="1088.8" y="704.4" fill="#222" textLength="10.9" lengthAdjust="spacingAndGlyphs">9</text><text x="1062.3" y="723.2" fill="#222" textLength="21.8" lengthAdjust="spacingAndGlyphs">10</text><text x="1004.3" y="720.0" fill="#222" textLength="21.8" lengthAdjust="spacingAndGlyphs">11</text><text x="972.0" y="687.9" fill="#222" textLength="21.8" lengthAdjust="spacingAndGlyphs">12</text><text x="1007.7" y="654.1" fill="#222" textLength="21.8" lengthAdjust="spacingAndGlyphs">13</text><text x="1087.6" y="648.3" fill="#222" textLength="21.8" lengthAdjust="spacingAndGlyphs">14</text><text x="1132.6" y="677.1" fill="#222" textLength="21.8" lengthAdjust="spacingAndGlyphs">15</text><text x="1083.2" y="710.8" fill="#222" textLength="21.8" lengthAdjust="spacingAndGlyphs">16</text><text x="973.0" y="702.4" fill="#222" textLength="21.8" lengthAdjust="spacingAndGlyphs">17</text><text x="911.8" y="644.1" fill="#222" textLength="21.8" lengthAdjust="spacingAndGlyphs">18</text><text x="979.6" y="583.0" fill="#222" textLength="21.8" lengthAdjust="spacingAndGlyphs">19</text><text x="1130.4" y="573.0" fill="#222" textLength="21.8" lengthAdjust="spacingAndGlyphs">20</text><text x="1214.2" y="626.3" fill="#222" textLength="21.8" lengthAdjust="spacingAndGlyphs">21</text><text x="1121.3" y="688.7" fill="#222" textLength="21.8" lengthAdjust="spacingAndGlyphs">22</text><text x="915.5" y="675.5" fill="#222" textLength="21.8" lengthAdjust="spacingAndGlyphs">23</text><text x="801.5" y="569.4" fill="#222" textLength="21.8" lengthAdjust="spacingAndGlyphs">24</text><text x="927.7" y="454.3" fill="#222" textLength="21.8" lengthAdjust="spacingAndGlyphs">25</text><text x="1208.9" y="436.1" fill="#222" textLength="21.8" lengthAdjust="spacingAndGlyphs">26</text><text x="1365.8" y="538.1" fill="#222" textLength="21.8" lengthAdjust="spacingAndGlyphs">27</text><text x="1192.6" y="651.6" fill="#222" textLength="21.8" lengthAdjust="spacingAndGlyphs">28</text><text x="807.1" y="628.4" fill="#222" textLength="21.8" lengthAdjust="spacingAndGlyphs">29</text><text x="593.0" y="437.7" fill="#222" textLength="21.8" lengthAdjust="spacingAndGlyphs">30</text><text x="1047.4" y="734.5" fill="#222" textLength="21.8" lengthAdjust="spacingAndGlyphs">31</text><text x="1026.1" y="733.1" fill="#222" textLength="21.8" lengthAdjust="spacingAndGlyphs">32</text><text x="1014.5" y="720.9" fill="#222" textLength="21.8" lengthAdjust="spacingAndGlyphs">33</text><text x="1028.1" y="708.2" fill="#222" textLength="21.8" lengthAdjust="spacingAndGlyphs">34</text><text x="1057.0" y="705.0" fill="#222" textLength="21.8" lengthAdjust="spacingAndGlyphs">35</text><text x="1073.9" y="715.6" fill="#222" textLength="21.8" lengthAdjust="spacingAndGlyphs">36</text><text x="1055.8" y="728.9" fill="#222" textLength="21.8" lengthAdjust="spacingAndGlyphs">37</text><text x="1013.5" y="725.5" fill="#222" textLength="21.8" lengthAdjust="spacingAndGlyphs">38</text><text x="990.1" y="702.5" fill="#222" textLength="21.8" lengthAdjust="spacingAndGlyphs">39</text><text x="1016.5" y="677.1" fill="#222" textLength="21.8" lengthAdjust="spacingAndGlyphs">40</text><text x="1074.8" y="672.5" fill="#222" textLength="21.8" lengthAdjust="spacingAndGlyphs">41</text><text x="1107.2" y="693.1" fill="#222" textLength="21.8" lengthAdjust="spacingAndGlyphs">42</text><text x="1070.8" y="717.3" fill="#222" textLength="21.8" lengthAdjust="spacingAndGlyphs">43</text><text x="990.9" y="711.6" fill="#222" textLength="21.8" lengthAdjust="spacingAndGlyphs">44</text><text x="946.6" y="669.4" fill="#222" textLength="21.8" lengthAdjust="spacingAndGlyphs">45</text><text x="996.0" y="623.8" fill="#222" textLength="21.8" lengthAdjust="spacingAndGlyphs">46</text><text x="1105.9" y="615.7" fill="#222" textLength="21.8" lengthAdjust="spacingAndGlyphs">47</text><text x="1167.0" y="655.3" fill="#222" textLength="21.8" lengthAdjust="spacingAndGlyphs">48</text><text x="1098.8" y="701.0" fill="#222" textLength="21.8" lengthAdjust="spacingAndGlyphs">49</text><text x="948.2" y="690.8" fill="#222" textLength="21.8" lengthAdjust="spacingAndGlyphs">50</text><text x="865.3" y="613.1" fill="#222" textLength="21.8" lengthAdjust="spacingAndGlyphs">51</text><text x="957.9" y="528.7" fill="#222" textLength="21.8" lengthAdjust="spacingAndGlyphs">52</text><text x="1163.4" y="514.9" fill="#222" textLength="21.8" lengthAdjust="spacingAndGlyphs">53</text><text x="1277.8" y="588.7" fill="#222" textLength="21.8" lengthAdjust="spacingAndGlyphs">54</text><text x="1150.2" y="671.9" fill="#222" textLength="21.8" lengthAdjust="spacingAndGlyphs">55</text><text x="869.1" y="654.2" fill="#222" textLength="21.8" lengthAdjust="spacingAndGlyphs">56</text><text x="713.6" y="512.4" fill="#222" textLength="21.8" lengthAdjust="spacingAndGlyphs">57</text><text x="886.5" y="355.5" fill="#222" textLength="21.8" lengthAdjust="spacingAndGlyphs">58</text><text x="1272.0" y="331.6" fill="#f00" textLength="21.8" lengthAdjust="spacingAndGlyphs">59</text><text x="1486.8" y="471.2" fill="#222" textLength="21.8" lengthAdjust="spacingAndGlyphs">60</text></g>
<g fill="none" stroke="#ff00ff" stroke-width="1.2"><polyline points="880.0,660.0 881.9,640.0 888.0,564.6"/><polyline points="895.4,556.4 1043.4,522.3"/><polyline points="1043.9,521.8 1196.0,576.0"/><polyline points="1185.4,569.0 1182.0,653.0"/><polyline points="1205.0,650.0 1130.0,670.0 1060.0,690.0"/><polyline points="796.0,628.7 993.0,707.0"/><polyline points="788.3,623.3 773.6,560.0 764.2,469.6"/><polyline points="776.5,457.2 860.0,429.5 1051.3,384.3"/><polyline points="1055.6,384.5 1250.0,446.4 1342.0,467.8"/><path d="M1326.4,456.1C1326.8,461.7 1327.0,477.3 1328.7,489.9C1330.5,502.5 1333.4,519.4 1336.9,531.8C1340.4,544.2 1345.4,554.6 1349.7,564.5C1354.0,574.4 1360.4,586.8 1362.5,591.2"/><polyline points="1362.4,591.5 1190.0,629.9 1040.0,663.3"/><polyline points="604.2,558.6 792.0,626.0 993.0,706.5"/><path d="M611.6,562.8C611.9,552.6 612.9,519.6 613.1,501.6C613.4,483.6 613.8,469.6 613.1,455.0C612.4,440.4 610.4,426.8 608.7,414.1C607.0,401.5 605.3,391.7 602.9,379.1C600.5,366.5 597.9,353.1 594.2,338.3C590.6,323.5 583.2,298.2 581.0,290.2"/><polyline points="1160.0,668.0 1100.0,685.0 1050.0,702.0"/><polyline points="856.0,647.0 1000.0,708.7"/><polyline points="841.8,645.0 840.4,622.3 830.2,527.9"/><polyline points="842.4,516.3 1039.6,453.2"/><polyline points="1055.6,452.2 1250.0,514.7 1262.0,519.0"/><polyline points="1254.2,515.5 1248.3,636.7"/><polyline points="1259.9,626.4 1190.0,655.5 1090.0,692.0"/><polyline points="703.9,589.3 850.0,648.0 993.0,707.6"/><path d="M684.5,580.0C684.2,571.7 682.8,543.9 682.6,530.0C682.4,516.1 682.7,506.9 683.3,496.5C683.9,486.1 684.9,477.1 686.2,467.4C687.5,457.7 689.1,449.5 691.3,438.3C693.5,427.1 698.0,406.7 699.3,400.4"/><path d="M701.5,399.7C724.9,394.5 806.8,376.8 841.9,368.7C877.0,360.6 887.2,357.9 912.3,351.0C937.4,344.1 967.8,335.0 992.4,327.0C1017.0,319.0 1046.3,307.6 1060.0,303.0C1073.7,298.4 1072.2,299.8 1074.7,299.2"/><path d="M1049.9,300.4C1059.2,301.5 1085.7,304.7 1106.0,307.0C1126.3,309.3 1152.7,312.8 1172.0,314.4C1191.3,316.0 1196.9,315.7 1221.6,316.9C1246.3,318.1 1293.8,320.9 1320.0,321.8C1346.2,322.7 1352.3,321.0 1378.7,322.3C1405.1,323.6 1461.7,328.2 1478.3,329.4"/><path d="M1487.5,334.0C1489.5,341.4 1496.5,362.5 1499.3,378.7C1502.1,394.9 1504.1,413.6 1504.5,431.1C1504.9,448.6 1503.7,467.3 1501.9,483.5C1500.2,499.7 1495.9,516.3 1494.0,528.1C1492.1,539.9 1491.2,549.9 1490.6,554.3"/><polyline points="992.8,708.7 996.3,720.0"/><polyline points="971.8,700.8 996.3,713.9"/><polyline points="970.8,700.3 993.3,709.6 998.0,731.4"/><polyline points="1003.4,734.5 1029.8,745.3"/><polyline points="1036.0,745.0 1054.7,742.2"/><polyline points="962.3,617.1 955.3,656.4 949.9,687.7"/><polyline points="963.9,636.1 977.9,630.0"/><polyline points="952.7,625.8 1018.2,610.5 1060.0,607.9"/><polyline points="963.6,636.3 999.9,620.6 1017.0,611.0"/><polyline points="1027.9,608.3 1060.0,618.8"/><polyline points="1040.0,611.7 1056.3,608.7 1113.4,618.6"/><polyline points="1040.0,613.4 1105.3,631.5 1130.6,636.8"/><polyline points="1130.6,628.3 1154.1,685.4 1146.6,692.4"/><polyline points="1127.9,634.2 1146.6,691.8"/><polyline points="1040.0,653.6 1137.0,644.8"/><polyline points="1090.0,699.3 1143.4,696.1 1154.2,686.2"/><polyline points="1030.0,718.1 1088.3,718.7"/><polyline points="1055.6,702.9 1102.3,698.3 1143.6,696.0"/><polyline points="1041.0,653.8 1005.1,673.9"/><polyline points="1005.0,690.0 1040.0,676.0 1080.0,668.0 1110.0,672.0"/><polyline points="985.0,690.0 1010.0,698.0 1040.0,708.0 1075.0,705.0"/><polyline points="1000.0,670.0 1030.0,662.0 1070.0,660.0"/><polyline points="1010.0,700.0 1040.0,694.0 1080.0,684.0"/><polyline points="985.0,692.0 1048.0,688.0 1090.0,684.0"/><polyline points="990.0,700.0 1044.0,696.0 1080.0,700.0"/><polyline points="1000.0,713.0 1050.0,708.0 1090.0,705.0"/><polyline points="1005.0,718.0 1039.0,716.0 1051.0,719.0 1090.0,718.0"/><polyline points="1048.3,688.0 1048.3,714.0"/><polyline points="980.0,685.0 1030.0,680.0 1085.0,676.0"/><polyline points="1010.0,691.5 1080.0,691.5"/></g>
<circle cx="1038.4" cy="705.6" r="7" fill="none" stroke="#f00" stroke-width="1.3"/>
<polygon points="1031.3,819.8 1038.8,819.8 1044.4,825.4 1044.4,832.9 1038.8,838.5 1031.3,838.5 1025.7,832.9 1025.7,825.4" fill="none" stroke="#000" stroke-width="1.2"/>
<circle cx="1035" cy="829.1" r="4.7" fill="#000"/>
</svg>
<div class="t" style="left:1762px;top:56.6px;font-size:31.2px;color:#000;">EZNEC+</div>
<!-- left panel -->
<svg class="a" style="left:0;top:0" width="152" height="400" font-family='"Liberation Sans", sans-serif'><rect x="1.5" y="62.5" width="147" height="180" fill="none" stroke="#a0a0a0" stroke-width="1.5"/><rect x="8.5" y="59" width="39" height="6" fill="#fff"/><text x="10.8" y="67.8" font-size="14px" fill="#111" text-anchor="start" textLength="34" lengthAdjust="spacingAndGlyphs">Zoom</text><rect x="20" y="74" width="21" height="110.5" fill="#fdfdfd"/><rect x="20" y="74" width="1.5" height="110.5" fill="#a9a9a9"/><rect x="39.5" y="74" width="1.5" height="110.5" fill="#a9a9a9"/><rect x="20" y="74" width="21" height="21" fill="#f0f0f0"/><rect x="20" y="74" width="21" height="1" fill="#e8e8e8"/><rect x="20" y="74" width="1" height="21" fill="#e8e8e8"/><rect x="21" y="75" width="19" height="1" fill="#fdfdfd"/><rect x="21" y="75" width="1" height="19" fill="#fdfdfd"/><rect x="20" y="93" width="21" height="2" fill="#6e6e6e"/><rect x="39" y="74" width="2" height="21" fill="#6e6e6e"/><rect x="20" y="164.5" width="21" height="20.0" fill="#f0f0f0"/><rect x="20" y="164.5" width="21" height="1" fill="#e8e8e8"/><rect x="20" y="164.5" width="1" height="20.0" fill="#e8e8e8"/><rect x="21" y="165.5" width="19" height="1" fill="#fdfdfd"/><rect x="21" y="165.5" width="1" height="18.0" fill="#fdfdfd"/><rect x="20" y="182.5" width="21" height="2" fill="#6e6e6e"/><rect x="39" y="164.5" width="2" height="20.0" fill="#6e6e6e"/><rect x="20" y="133" width="21" height="10" fill="#f0f0f0"/><rect x="20" y="133" width="21" height="1" fill="#e8e8e8"/><rect x="20" y="133" width="1" height="10" fill="#e8e8e8"/><rect x="21" y="134" width="19" height="1" fill="#fdfdfd"/><rect x="21" y="134" width="1" height="8" fill="#fdfdfd"/><rect x="20" y="141" width="21" height="2" fill="#6e6e6e"/><rect x="39" y="133" width="2" height="10" fill="#6e6e6e"/><path d="M25.5,86.8 L34.5,86.8 L30.0,81.5 Z" fill="#000"/><path d="M25.5,171.0 L34.5,171.0 L30.0,176.3 Z" fill="#000"/><rect x="90" y="74" width="21" height="110.5" fill="#fdfdfd"/><rect x="90" y="74" width="1.5" height="110.5" fill="#a9a9a9"/><rect x="109.5" y="74" width="1.5" height="110.5" fill="#a9a9a9"/><rect x="90" y="74" width="21" height="21" fill="#f0f0f0"/><rect x="90" y="74" width="21" height="1" fill="#e8e8e8"/><rect x="90" y="74" width="1" height="21" fill="#e8e8e8"/><rect x="91" y="75" width="19" height="1" fill="#fdfdfd"/><rect x="91" y="75" width="1" height="19" fill="#fdfdfd"/><rect x="90" y="93" width="21" height="2" fill="#6e6e6e"/><rect x="109" y="74" width="2" height="21" fill="#6e6e6e"/><rect x="90" y="164.5" width="21" height="20.0" fill="#f0f0f0"/><rect x="90" y="164.5" width="21" height="1" fill="#e8e8e8"/><rect x="90" y="164.5" width="1" height="20.0" fill="#e8e8e8"/><rect x="91" y="165.5" width="19" height="1" fill="#fdfdfd"/><rect x="91" y="165.5" width="1" height="18.0" fill="#fdfdfd"/><rect x="90" y="182.5" width="21" height="2" fill="#6e6e6e"/><rect x="109" y="164.5" width="2" height="20.0" fill="#6e6e6e"/><rect x="90" y="136.5" width="21" height="9.5" fill="#f0f0f0"/><rect x="90" y="136.5" width="21" height="1" fill="#e8e8e8"/><rect x="90" y="136.5" width="1" height="9.5" fill="#e8e8e8"/><rect x="91" y="137.5" width="19" height="1" fill="#fdfdfd"/><rect x="91" y="137.5" width="1" height="7.5" fill="#fdfdfd"/><rect x="90" y="144" width="21" height="2" fill="#6e6e6e"/><rect x="109" y="136.5" width="2" height="9.5" fill="#6e6e6e"/><path d="M95.5,86.8 L104.5,86.8 L100.0,81.5 Z" fill="#000"/><path d="M95.5,171.0 L104.5,171.0 L100.0,176.3 Z" fill="#000"/><text x="10.8" y="197.8" font-size="14px" fill="#111" text-anchor="start" textLength="42" lengthAdjust="spacingAndGlyphs">Display</text><text x="80.8" y="197.8" font-size="14px" fill="#111" text-anchor="start" textLength="42" lengthAdjust="spacingAndGlyphs">Current</text><rect x="10.5" y="205" width="50.5" height="30" fill="#f0f0f0"/><rect x="10.5" y="205" width="50.5" height="1" fill="#e8e8e8"/><rect x="10.5" y="205" width="1" height="30" fill="#e8e8e8"/><rect x="11.5" y="206" width="48.5" height="1" fill="#fdfdfd"/><rect x="11.5" y="206" width="1" height="28" fill="#fdfdfd"/><rect x="10.5" y="233" width="50.5" height="2" fill="#6e6e6e"/><rect x="59" y="205" width="2" height="30" fill="#6e6e6e"/><rect x="80.5" y="205" width="50.5" height="30" fill="#f0f0f0"/><rect x="80.5" y="205" width="50.5" height="1" fill="#e8e8e8"/><rect x="80.5" y="205" width="1" height="30" fill="#e8e8e8"/><rect x="81.5" y="206" width="48.5" height="1" fill="#fdfdfd"/><rect x="81.5" y="206" width="1" height="28" fill="#fdfdfd"/><rect x="80.5" y="233" width="50.5" height="2" fill="#6e6e6e"/><rect x="129" y="205" width="2" height="30" fill="#6e6e6e"/><text x="35.7" y="224" font-size="14px" fill="#111" text-anchor="middle" textLength="35" lengthAdjust="spacingAndGlyphs">Reset</text><text x="105.7" y="224" font-size="14px" fill="#111" text-anchor="middle" textLength="35" lengthAdjust="spacingAndGlyphs">Reset</text><rect x="1.5" y="253.0" width="147.5" height="110.0" fill="none" stroke="#a0a0a0" stroke-width="1.5"/><rect x="9" y="249.5" width="79" height="6" fill="#fff"/><text x="11.8" y="258.3" font-size="14px" fill="#111" text-anchor="start" textLength="73.5" lengthAdjust="spacingAndGlyphs">Move Image</text><text x="9.3" y="278" font-size="13.5px" fill="#111" text-anchor="start">X</text><text x="9.3" y="297.3" font-size="13.5px" fill="#111" text-anchor="start">Y</text><text x="9.3" y="317.2" font-size="13.5px" fill="#111" text-anchor="start">Z</text><rect x="30.5" y="264.5" width="110.5" height="19.5" fill="#fdfdfd"/><rect x="30.5" y="264.5" width="110.5" height="1.5" fill="#a9a9a9"/><rect x="30.5" y="264.5" width="20.5" height="19.5" fill="#f0f0f0"/><rect x="30.5" y="264.5" width="20.5" height="1" fill="#e8e8e8"/><rect x="30.5" y="264.5" width="1" height="19.5" fill="#e8e8e8"/><rect x="31.5" y="265.5" width="18.5" height="1" fill="#fdfdfd"/><rect x="31.5" y="265.5" width="1" height="17.5" fill="#fdfdfd"/><rect x="30.5" y="282" width="20.5" height="2" fill="#6e6e6e"/><rect x="49.0" y="264.5" width="2" height="19.5" fill="#6e6e6e"/><rect x="120.5" y="264.5" width="20.5" height="19.5" fill="#f0f0f0"/><rect x="120.5" y="264.5" width="20.5" height="1" fill="#e8e8e8"/><rect x="120.5" y="264.5" width="1" height="19.5" fill="#e8e8e8"/><rect x="121.5" y="265.5" width="18.5" height="1" fill="#fdfdfd"/><rect x="121.5" y="265.5" width="1" height="17.5" fill="#fdfdfd"/><rect x="120.5" y="282" width="20.5" height="2" fill="#6e6e6e"/><rect x="139" y="264.5" width="2" height="19.5" fill="#6e6e6e"/><rect x="80" y="264.5" width="9" height="19.5" fill="#f0f0f0"/><rect x="80" y="264.5" width="9" height="1" fill="#e8e8e8"/><rect x="80" y="264.5" width="1" height="19.5" fill="#e8e8e8"/><rect x="81" y="265.5" width="7" height="1" fill="#fdfdfd"/><rect x="81" y="265.5" width="1" height="17.5" fill="#fdfdfd"/><rect x="80" y="282" width="9" height="2" fill="#6e6e6e"/><rect x="87" y="264.5" width="2" height="19.5" fill="#6e6e6e"/><path d="M43.0,269.25 L43.0,278.25 L38.0,273.75 Z" fill="#000"/><path d="M128,269.25 L128,278.25 L133,273.75 Z" fill="#000"/><rect x="30.5" y="284" width="110.5" height="19.5" fill="#fdfdfd"/><rect x="30.5" y="284" width="110.5" height="1.5" fill="#a9a9a9"/><rect x="30.5" y="284" width="20.5" height="19.5" fill="#f0f0f0"/><rect x="30.5" y="284" width="20.5" height="1" fill="#e8e8e8"/><rect x="30.5" y="284" width="1" height="19.5" fill="#e8e8e8"/><rect x="31.5" y="285" width="18.5" height="1" fill="#fdfdfd"/><rect x="31.5" y="285" width="1" height="17.5" fill="#fdfdfd"/><rect x="30.5" y="301.5" width="20.5" height="2" fill="#6e6e6e"/><rect x="49.0" y="284" width="2" height="19.5" fill="#6e6e6e"/><rect x="120.5" y="284" width="20.5" height="19.5" fill="#f0f0f0"/><rect x="120.5" y="284" width="20.5" height="1" fill="#e8e8e8"/><rect x="120.5" y="284" width="1" height="19.5" fill="#e8e8e8"/><rect x="121.5" y="285" width="18.5" height="1" fill="#fdfdfd"/><rect x="121.5" y="285" width="1" height="17.5" fill="#fdfdfd"/><rect x="120.5" y="301.5" width="20.5" height="2" fill="#6e6e6e"/><rect x="139" y="284" width="2" height="19.5" fill="#6e6e6e"/><rect x="80" y="284" width="9" height="19.5" fill="#f0f0f0"/><rect x="80" y="284" width="9" height="1" fill="#e8e8e8"/><rect x="80" y="284" width="1" height="19.5" fill="#e8e8e8"/><rect x="81" y="285" width="7" height="1" fill="#fdfdfd"/><rect x="81" y="285" width="1" height="17.5" fill="#fdfdfd"/><rect x="80" y="301.5" width="9" height="2" fill="#6e6e6e"/><rect x="87" y="284" width="2" height="19.5" fill="#6e6e6e"/><path d="M43.0,288.75 L43.0,297.75 L38.0,293.25 Z" fill="#000"/><path d="M128,288.75 L128,297.75 L133,293.25 Z" fill="#000"/><rect x="30.5" y="303.5" width="110.5" height="19.5" fill="#fdfdfd"/><rect x="30.5" y="303.5" width="110.5" height="1.5" fill="#a9a9a9"/><rect x="30.5" y="303.5" width="20.5" height="19.5" fill="#f0f0f0"/><rect x="30.5" y="303.5" width="20.5" height="1" fill="#e8e8e8"/><rect x="30.5" y="303.5" width="1" height="19.5" fill="#e8e8e8"/><rect x="31.5" y="304.5" width="18.5" height="1" fill="#fdfdfd"/><rect x="31.5" y="304.5" width="1" height="17.5" fill="#fdfdfd"/><rect x="30.5" y="321" width="20.5" height="2" fill="#6e6e6e"/><rect x="49.0" y="303.5" width="2" height="19.5" fill="#6e6e6e"/><rect x="120.5" y="303.5" width="20.5" height="19.5" fill="#f0f0f0"/><rect x="120.5" y="303.5" width="20.5" height="1" fill="#e8e8e8"/><rect x="120.5" y="303.5" width="1" height="19.5" fill="#e8e8e8"/><rect x="121.5" y="304.5" width="18.5" height="1" fill="#fdfdfd"/><rect x="121.5" y="304.5" width="1" height="17.5" fill="#fdfdfd"/><rect x="120.5" y="321" width="20.5" height="2" fill="#6e6e6e"/><rect x="139" y="303.5" width="2" height="19.5" fill="#6e6e6e"/><rect x="79.5" y="303.5" width="9.0" height="19.5" fill="#f0f0f0"/><rect x="79.5" y="303.5" width="9.0" height="1" fill="#e8e8e8"/><rect x="79.5" y="303.5" width="1" height="19.5" fill="#e8e8e8"/><rect x="80.5" y="304.5" width="7.0" height="1" fill="#fdfdfd"/><rect x="80.5" y="304.5" width="1" height="17.5" fill="#fdfdfd"/><rect x="79.5" y="321" width="9.0" height="2" fill="#6e6e6e"/><rect x="86.5" y="303.5" width="2" height="19.5" fill="#6e6e6e"/><path d="M43.0,308.25 L43.0,317.25 L38.0,312.75 Z" fill="#000"/><path d="M128,308.25 L128,317.25 L133,312.75 Z" fill="#000"/><rect x="40.5" y="335" width="71.0" height="20.5" fill="#f0f0f0"/><rect x="40.5" y="335" width="71.0" height="1" fill="#e8e8e8"/><rect x="40.5" y="335" width="1" height="20.5" fill="#e8e8e8"/><rect x="41.5" y="336" width="69.0" height="1" fill="#fdfdfd"/><rect x="41.5" y="336" width="1" height="18.5" fill="#fdfdfd"/><rect x="40.5" y="353.5" width="71.0" height="2" fill="#6e6e6e"/><rect x="109.5" y="335" width="2" height="20.5" fill="#6e6e6e"/><text x="75.8" y="350" font-size="14px" fill="#111" text-anchor="middle" textLength="35" lengthAdjust="spacingAndGlyphs">Reset</text><rect x="0.5" y="377.5" width="13.5" height="13.5" fill="#fff" stroke="#333" stroke-width="1"/><rect x="1.5" y="378.5" width="11.5" height="11.5" fill="none" stroke="#cfcfcf" stroke-width="1"/><path d="M3,384.5 L6,388 L12,380.5" fill="none" stroke="#000" stroke-width="2"/><text x="23" y="389.3" font-size="14px" fill="#111" text-anchor="start" textLength="102" lengthAdjust="spacingAndGlyphs">Center Ant Image</text><rect x="23" y="391" width="8.5" height="1" fill="#111"/></svg>
<!-- status -->
<div class="t" style="left:165px;top:952px;font-size:13px;color:#111;">Wire Number</div>
<div class="t" style="left:255px;top:952px;font-size:13px;color:#111;">59</div>
<div class="t" style="left:165px;top:970px;font-size:13px;color:#111;">Length</div>
<div class="t" style="left:255px;top:970px;font-size:13px;color:#111;">19.9199 m</div>
<div class="t" style="left:165px;top:987px;font-size:13px;color:#111;">Seg Length</div>
<div class="t" style="left:255px;top:987px;font-size:13px;color:#111;">0.995993 m</div>
<div class="t" style="left:165px;top:1005px;font-size:13px;color:#111;">Diameter</div>
<div class="t" style="left:255px;top:1005px;font-size:13px;color:#111;">1 mm</div>
</body></html>
